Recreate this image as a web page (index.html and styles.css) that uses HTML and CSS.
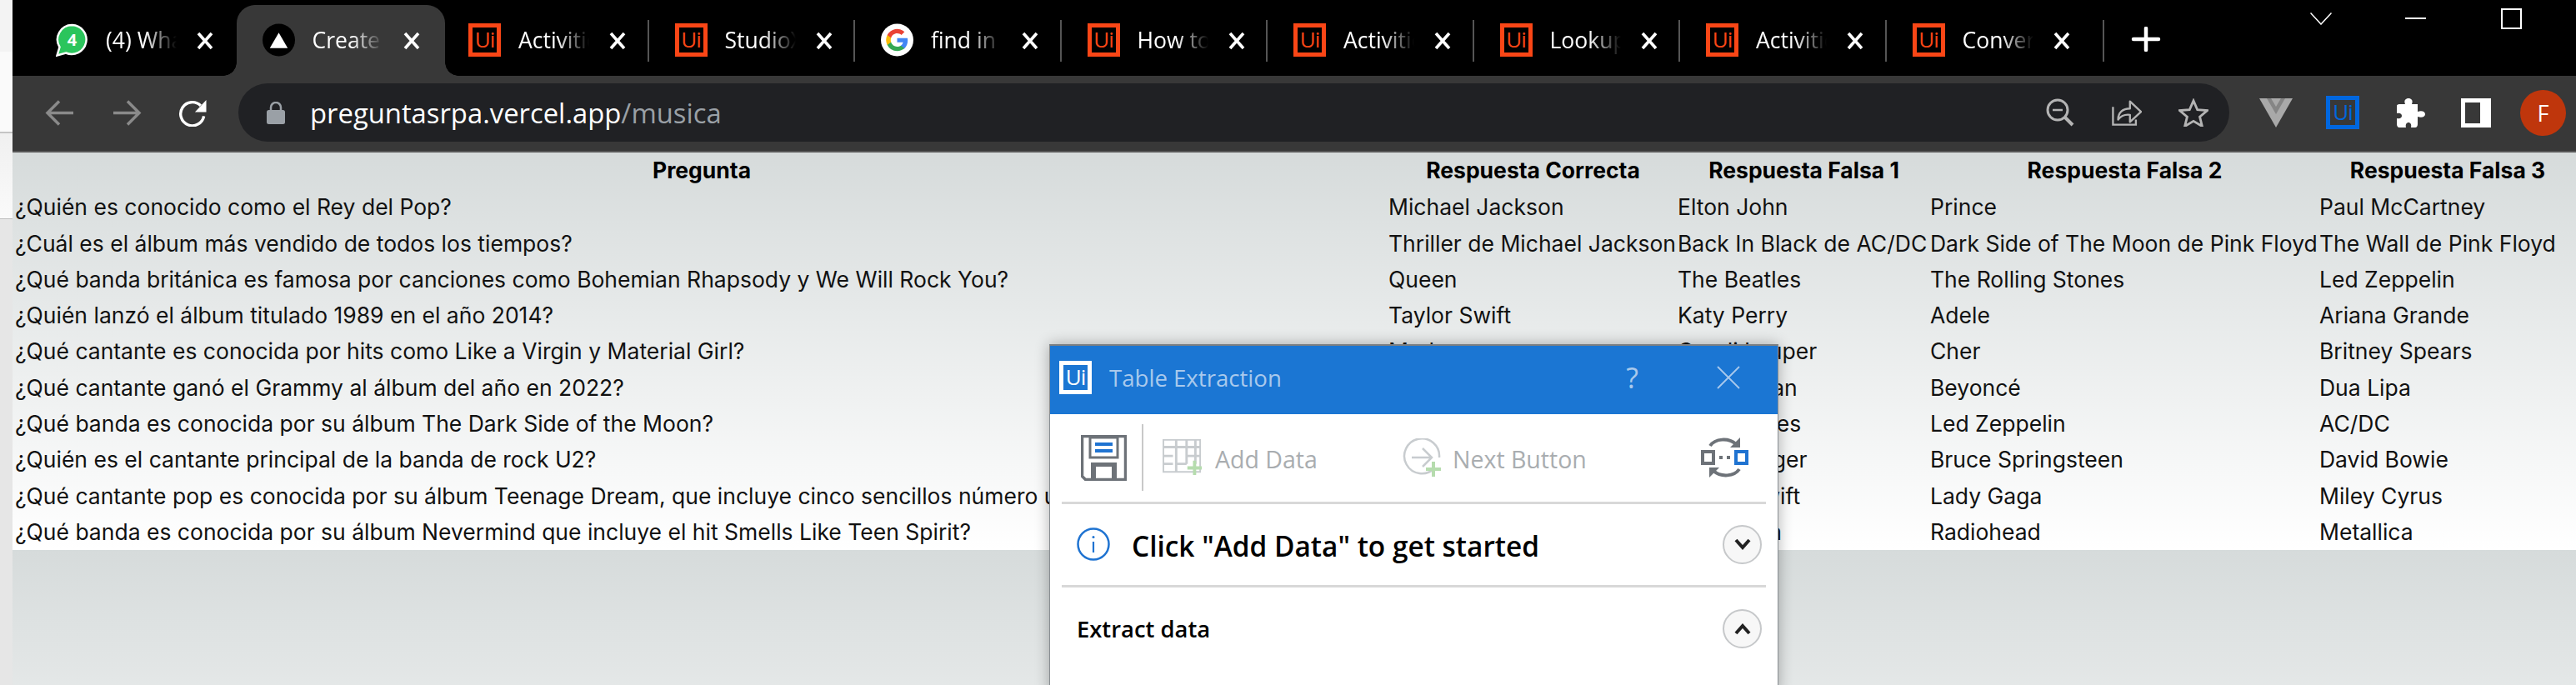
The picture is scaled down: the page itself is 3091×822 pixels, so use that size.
FILE: index.html
```html
<!DOCTYPE html>
<html lang="en">
<head>
    <meta charset="UTF-8">
    <meta name="viewport" content="width=device-width, initial-scale=1.0">
    <title>Preguntas RPA</title>
    <link rel="stylesheet" href="styles.css">
</head>
<body>
    <svg class="defs" width="0" height="0">
        <symbol id="close" viewBox="0 0 20 22"><path d="M2 2 18 20M18 2 2 20" stroke="#fff" stroke-width="3.6" fill="none"/></symbol>
    </svg>

    <div class="strip"></div>

    <div class="browser">
        <!-- tabs -->
        <div class="tabs">
            <div class="tab">
                <svg class="favicon" viewBox="0 0 39 39"><path d="M19.5 1.5A17.5 17.5 0 0 0 4.5 28L1.5 38l10.5-3A17.5 17.5 0 1 0 19.5 1.5z" fill="#2bc55c" stroke="#fff" stroke-width="2.5"/><text x="19.5" y="26" class="wa-num">4</text></svg>
                <span class="tab-title">(4) WhatsApp</span>
                <svg class="tab-close"><use href="#close"/></svg>
            </div>
            <div class="tab active">
                <svg class="favicon" viewBox="0 0 40 40"><circle cx="20" cy="20" r="20" fill="#000"/><path d="M20 11 31 30H9z" fill="#fff"/></svg>
                <span class="tab-title">Create Next App</span>
                <svg class="tab-close"><use href="#close"/></svg>
            </div>
            <div class="tab">
                <span class="ui-logo">Ui</span>
                <span class="tab-title">Activities</span>
                <svg class="tab-close"><use href="#close"/></svg>
            </div>
            <div class="tab">
                <span class="ui-logo">Ui</span>
                <span class="tab-title">StudioX</span>
                <svg class="tab-close"><use href="#close"/></svg>
            </div>
            <div class="tab">
                <svg class="favicon" viewBox="0 0 40 40">
                    <circle cx="20" cy="20" r="20" fill="#fff"/>
                    <path d="M33 20.4c0-1-.1-1.900-.3-2.700H20v5.200h7.300a6.300 6.300 0 0 1-2.700 4.100v3.400h4.400c2.500-2.400 4-5.800 4-10z" fill="#4285f4"/>
                    <path d="M20 33.500c3.600 0 6.700-1.200 9-3.200l-4.400-3.400c-1.200.8-2.800 1.300-4.600 1.300-3.500 0-6.500-2.400-7.500-5.600H7.900v3.500A13.500 13.500 0 0 0 20 33.500z" fill="#34a853"/>
                    <path d="M12.500 22.600a8.100 8.100 0 0 1 0-5.200v-3.500H7.900a13.500 13.500 0 0 0 0 12.200z" fill="#fbbc05"/>
                    <path d="M20 11.800c2 0 3.800.7 5.200 2l3.900-3.900A13.500 13.500 0 0 0 7.900 13.900l4.600 3.500c1-3.200 4-5.600 7.500-5.600z" fill="#ea4335"/>
                </svg>
                <span class="tab-title">find in page</span>
                <svg class="tab-close"><use href="#close"/></svg>
            </div>
            <div class="tab">
                <span class="ui-logo">Ui</span>
                <span class="tab-title">How to use</span>
                <svg class="tab-close"><use href="#close"/></svg>
            </div>
            <div class="tab">
                <span class="ui-logo">Ui</span>
                <span class="tab-title">Activities</span>
                <svg class="tab-close"><use href="#close"/></svg>
            </div>
            <div class="tab">
                <span class="ui-logo">Ui</span>
                <span class="tab-title">Lookup</span>
                <svg class="tab-close"><use href="#close"/></svg>
            </div>
            <div class="tab">
                <span class="ui-logo">Ui</span>
                <span class="tab-title">Activities</span>
                <svg class="tab-close"><use href="#close"/></svg>
            </div>
            <div class="tab last">
                <span class="ui-logo">Ui</span>
                <span class="tab-title">Convert</span>
                <svg class="tab-close"><use href="#close"/></svg>
            </div>
            <svg class="new-tab" viewBox="0 0 36 30"><path d="M18 2v26M3 15h30" stroke="#fff" stroke-width="4.500" stroke-linecap="round"/></svg>
            <div class="win-controls">
                <svg class="win-chevron" viewBox="0 0 26 15"><path d="M.5.5 13 14 25.500.5" stroke="#fff" stroke-width="1.500" fill="none"/></svg>
                <span class="win-min"></span>
                <span class="win-max"></span>
            </div>
        </div>

        <!-- address bar -->
        <div class="toolbar">
            <svg class="nav-icon" viewBox="0 0 36 32"><path d="M34 16H4M17 2 3 16l14 14" stroke="#8a8a8a" stroke-width="3.500" fill="none"/></svg>
            <svg class="nav-icon" viewBox="0 0 36 32"><path d="M2 16h30M19 2l14 14-14 14" stroke="#8a8a8a" stroke-width="3.500" fill="none"/></svg>
            <svg class="nav-icon" viewBox="0 0 36 34"><path d="M31 21A14.500 14.500 0 1 1 27 8" stroke="#fff" stroke-width="3.500" fill="none"/><path d="M34 1v15H20z" fill="#fff"/></svg>
            <div class="omnibox">
                <svg class="lock" viewBox="0 0 22 27"><path d="M5 12V7a6 6 0 0 1 12 0v5" stroke="#9aa0a6" stroke-width="2.500" fill="none"/><rect y="10" width="22" height="17" rx="2.500" fill="#9aa0a6"/></svg>
                <span class="url">preguntasrpa.vercel.app<span class="url-path">/musica</span></span>
                <div class="omni-icons">
                    <svg class="omni-icon" viewBox="0 0 34 34"><circle cx="14" cy="14" r="12" stroke="#b4b4b4" stroke-width="3" fill="none"/><path d="M8 14h12" stroke="#b4b4b4" stroke-width="2.500"/><path d="M23 23l9 9" stroke="#b4b4b4" stroke-width="4"/></svg>
                    <svg class="omni-icon" viewBox="0 0 38 34"><path d="M1.500 10v22.500h29V26" stroke="#b4b4b4" stroke-width="2.500" fill="none"/><path d="M8 26c0-9 6-14 15-14V3l14 13-14 13v-9c-7-1-11 1-15 6z" stroke="#b4b4b4" stroke-width="2.500" fill="none" stroke-linejoin="round"/></svg>
                    <svg class="omni-icon" viewBox="0 0 38 36"><path d="M19 3l5 11.500 12.500 1-9.500 8 3 12-11-6.500-11 6.500 3-12-9.500-8 12.500-1z" stroke="#b4b4b4" stroke-width="3" fill="none"/></svg>
                </div>
            </div>
            <div class="ext-icons">
                <svg class="ext-v" viewBox="0 0 40 35"><path d="M0 0h40L20 35z" fill="#a9a9a9"/><path d="M9 0h22L20 19z" fill="#858585"/><path d="M14 0h12l-6 10z" fill="#a9a9a9"/></svg>
                <span class="ui-logo blue">Ui</span>
                <svg class="ext-puzzle" viewBox="0 0 36 35"><path d="M5 7h7c-2-5 1-7 4-7s6 2 4 7h7v9c5-2 9 0 9 3s-4 5-9 3v9c0 2-1 4-3 4h-5c1-4-1-6-3-6s-4 2-3 6H5c-2 0-3-2-3-4v-7c4 1 6-1 6-3s-2-4-6-3V9c0-1 1-2 3-2z" fill="#fff"/></svg>
                <svg class="ext-side" viewBox="0 0 36 35"><path d="M0 0h36v35H0zM5 5v25h18V5z" fill="#fff" fill-rule="evenodd"/></svg>
                <span class="avatar">F</span>
            </div>
        </div>

        <!-- page content -->
        <main class="page">
            <table class="questions">
                <colgroup>
                    <col class="col-q"><col class="col-a"><col class="col-b"><col class="col-c"><col class="col-d">
                </colgroup>
                <thead>
                    <tr>
                        <th>Pregunta</th>
                        <th>Respuesta Correcta</th>
                        <th>Respuesta Falsa 1</th>
                        <th>Respuesta Falsa 2</th>
                        <th>Respuesta Falsa 3</th>
                    </tr>
                </thead>
                <tbody>
                    <tr><td>¿Quién es conocido como el Rey del Pop?</td><td>Michael Jackson</td><td>Elton John</td><td>Prince</td><td>Paul McCartney</td></tr>
                    <tr><td>¿Cuál es el álbum más vendido de todos los tiempos?</td><td>Thriller de Michael Jackson</td><td>Back In Black de AC/DC</td><td>Dark Side of The Moon de Pink Floyd</td><td>The Wall de Pink Floyd</td></tr>
                    <tr><td>¿Qué banda británica es famosa por canciones como Bohemian Rhapsody y We Will Rock You?</td><td>Queen</td><td>The Beatles</td><td>The Rolling Stones</td><td>Led Zeppelin</td></tr>
                    <tr><td>¿Quién lanzó el álbum titulado 1989 en el año 2014?</td><td>Taylor Swift</td><td>Katy Perry</td><td>Adele</td><td>Ariana Grande</td></tr>
                    <tr><td>¿Qué cantante es conocida por hits como Like a Virgin y Material Girl?</td><td>Madonna</td><td>Cyndi Lauper</td><td>Cher</td><td>Britney Spears</td></tr>
                    <tr><td>¿Qué cantante ganó el Grammy al álbum del año en 2022?</td><td>Olivia Rodrigo</td><td>Ed Sheeran</td><td>Beyoncé</td><td>Dua Lipa</td></tr>
                    <tr><td>¿Qué banda es conocida por su álbum The Dark Side of the Moon?</td><td>Pink Floyd</td><td>The Beatles</td><td>Led Zeppelin</td><td>AC/DC</td></tr>
                    <tr><td>¿Quién es el cantante principal de la banda de rock U2?</td><td>Bono</td><td>Mick Jagger</td><td>Bruce Springsteen</td><td>David Bowie</td></tr>
                    <tr><td>¿Qué cantante pop es conocida por su álbum Teenage Dream, que incluye cinco sencillos número uno?</td><td>Katy Perry</td><td>Taylor Swift</td><td>Lady Gaga</td><td>Miley Cyrus</td></tr>
                    <tr><td>¿Qué banda es conocida por su álbum Nevermind que incluye el hit Smells Like Teen Spirit?</td><td>Nirvana</td><td>Pearl Jam</td><td>Radiohead</td><td>Metallica</td></tr>
                </tbody>
            </table>
        </main>
    </div>

    <!-- floating wizard window -->
    <section class="dialog">
        <header class="dialog-title">
            <span class="ui-logo white">Ui</span>
            <span class="dialog-name">Table Extraction</span>
            <span class="dialog-help">?</span>
            <svg class="dialog-x" viewBox="0 0 28 28"><path d="M1 1l26 26M27 1 1 27" stroke="#a9c9ec" stroke-width="1.800"/></svg>
        </header>
        <div class="dialog-tools">
            <svg class="tool-save" viewBox="0 0 55 55"><path d="M1.500 1.500h52v52h-48l-4-4z" fill="#fff" stroke="#6d7278" stroke-width="3.500"/><path d="M11 3h33v24H11z" fill="#fff" stroke="#6d7278" stroke-width="3"/><path d="M17 9h21v4H17zM17 17h21v4H17z" fill="#1f73d1"/><path d="M12 52V33h31v19h-6V38H18v14z" fill="#6d7278"/></svg>
            <span class="tool-sep"></span>
            <div class="tool">
                <svg class="tool-icon" viewBox="0 0 50 46"><path d="M1 1h46v40H1z" fill="none" stroke="#c8cccf" stroke-width="2"/><path d="M1 10h46M1 21h12M1 31h12M17 1v40M30 1v30M41 1v30M30 21h17M17 31h13" stroke="#c8cccf" stroke-width="3"/><path d="M40 27v18M31 36h18" stroke="#b6dcae" stroke-width="4"/></svg>
                <span>Add Data</span>
            </div>
            <div class="tool next">
                <svg class="tool-icon" viewBox="0 0 46 46"><path d="M37 36A21 21 0 1 1 43 23" fill="none" stroke="#c8cccf" stroke-width="2.500"/><path d="M10 23h24M23 12l11 11-11 11" fill="none" stroke="#c8cccf" stroke-width="2.500"/><path d="M36 28v18M27 37h18" stroke="#b6dcae" stroke-width="4"/></svg>
                <span>Next Button</span>
            </div>
            <svg class="tool-sync" viewBox="0 0 57 52"><path d="M11 12C17 3 33 2 42 10" fill="none" stroke="#6d7278" stroke-width="4"/><path d="M47 2v12H35z" fill="#6d7278"/><path d="M46 40C40 49 24 50 15 42" fill="none" stroke="#6d7278" stroke-width="4"/><path d="M10 50V38h12z" fill="#6d7278"/><rect x="2" y="19" width="13" height="14" fill="#fff" stroke="#6d7278" stroke-width="4"/><rect x="42" y="19" width="13" height="14" fill="#fff" stroke="#1f73d1" stroke-width="4"/><path d="M22 24h4v4h-4zM31 24h4v4h-4z" fill="#6d7278"/></svg>
        </div>
        <div class="dialog-row info">
            <svg class="info-icon" viewBox="0 0 40 40"><circle cx="20" cy="20" r="18.500" fill="none" stroke="#1f73d1" stroke-width="2.500"/><path d="M20 17v13" stroke="#1f73d1" stroke-width="2.200"/><circle cx="20" cy="11.500" r="1.500" fill="#1f73d1"/></svg>
            <span class="info-text">Click "Add Data" to get started</span>
            <span class="round-btn"><svg viewBox="0 0 20 14"><path d="M2 2l8 9 8-9" fill="none" stroke="#222" stroke-width="4"/></svg></span>
        </div>
        <div class="dialog-row section">
            <span class="section-name">Extract data</span>
            <span class="round-btn"><svg viewBox="0 0 20 14"><path d="M2 12l8-9 8 9" fill="none" stroke="#222" stroke-width="4"/></svg></span>
        </div>
    </section>
</body>
</html>
```

FILE: styles.css
```css
* {
    box-sizing: border-box;
}
body {
    margin: 0;
    height: 822px;
    display: flex;
    overflow: hidden;
    position: relative;
    font-family: "Open Sans", "Liberation Sans", sans-serif;
    background: #f1f1f1;
}
.defs {
    position: absolute;
}
.strip {
    width: 15px;
    flex: none;
    background: linear-gradient(#f3f3f3 0, #f3f3f3 62px, #fafafa 62px, #fafafa 158px, #c4c4c4 158px, #c4c4c4 160px, #f0f0f0 160px, #fafafa 262px, #bdbdbd 262px, #bdbdbd 263px, #e6e6e6 263px);
}
.browser {
    flex: 1;
    min-width: 0;
    display: flex;
    flex-direction: column;
}

/* tabs */
.tabs {
    height: 91px;
    flex: none;
    background: #000;
    display: flex;
    padding-left: 21px;
    position: relative;
}
.tab {
    width: 247.5px;
    height: 85px;
    margin-top: 6px;
    padding: 22px 0 0 31px;
    display: flex;
    align-items: flex-start;
    position: relative;
    color: #fff;
}
.tab::after {
    content: "";
    position: absolute;
    right: 0;
    top: 18px;
    height: 50px;
    width: 2px;
    background: #555;
}
.tab.active {
    background: #383838;
    border-radius: 22px 22px 0 0;
    box-shadow: 3px 0 0 #383838;
}
.tab:first-child::after {
    display: none;
}
/* flared bottom corners of the selected tab */
.tab.active::before,
.tab.active::after {
    content: "";
    position: absolute;
    top: auto;
    bottom: 0;
    width: 16px;
    height: 16px;
}
.tab.active::before {
    left: -16px;
    background: radial-gradient(circle at 0 0, #000 15.5px, #383838 16px);
}
.tab.active::after {
    right: -19px;
    background: radial-gradient(circle at 100% 0, #000 15.5px, #383838 16px);
}
.tab.last {
    width: 261px;
}
.favicon {
    width: 39px;
    height: 40px;
    flex: none;
}
.tab-title {
    width: 85px;
    margin-left: 21px;
    font-size: 26.5px;
    line-height: 40px;
    white-space: nowrap;
    overflow: hidden;
    flex: none;
    -webkit-mask-image: linear-gradient(to right, #000 55%, transparent 100%);
    mask-image: linear-gradient(to right, #000 55%, transparent 100%);
}
.tab-close {
    width: 20px;
    height: 22px;
    margin: 10px 0 0 24px;
    flex: none;
}
.wa-num {
    font-size: 20px;
    font-weight: 700;
    fill: #fff;
    text-anchor: middle;
}
.ui-logo {
    width: 39px;
    height: 40px;
    flex: none;
    border: 5px solid #fa4616;
    color: #fa4616;
    font-size: 26px;
    line-height: 29px;
    text-align: center;
    letter-spacing: -1px;
}
.ui-logo.blue {
    border-color: #0067df;
    color: #0067df;
    width: 40px;
}
.ui-logo.white {
    border-color: #fff;
    color: #fff;
    background: #1b76d3;
}
.new-tab {
    width: 36px;
    height: 30px;
    margin: 32px 0 0 32px;
    flex: none;
}
.win-controls {
    position: absolute;
    top: 0;
    left: 2757px;
    display: flex;
    align-items: flex-start;
}
.win-chevron {
    width: 26px;
    height: 15px;
    margin-top: 15px;
}
.win-min {
    width: 25px;
    height: 2px;
    background: #fff;
    margin: 21px 0 0 88px;
}
.win-max {
    width: 25px;
    height: 25px;
    border: 2px solid #fff;
    margin: 10px 0 0 90px;
}

/* toolbar */
.toolbar {
    height: 92px;
    flex: none;
    background: #383838;
    border-bottom: 2px solid #575757;
    display: flex;
    align-items: center;
    padding: 0 12px 2px 39px;
}
.nav-icon {
    width: 36px;
    height: 33px;
    margin-right: 44px;
    flex: none;
}
.nav-icon:nth-of-type(3) {
    margin-right: 36px;
}
.omnibox {
    width: 2389px;
    height: 70px;
    flex: none;
    border-radius: 35px;
    background: #202124;
    display: flex;
    align-items: center;
    padding: 0 25px 0 34px;
}
.lock {
    width: 22px;
    height: 27px;
    flex: none;
}
.url {
    margin-left: 30px;
    color: #fff;
    font-size: 32.8px;
}
.url-path {
    color: #9aa0a6;
}
.omni-icons {
    margin-left: auto;
    display: flex;
    align-items: center;
    gap: 44px;
}
.omni-icon {
    width: 36px;
    height: 34px;
}
.ext-icons {
    flex: 1;
    display: flex;
    align-items: center;
    margin-left: 36px;
}
.ext-v {
    width: 40px;
    height: 35px;
    margin-right: 40px;
}
.ext-puzzle {
    width: 36px;
    height: 35px;
    margin: 0 43px;
}
.ext-side {
    width: 36px;
    height: 35px;
    margin-right: 35px;
}
.avatar {
    width: 55px;
    height: 55px;
    border-radius: 50%;
    background: #bf360c;
    color: #fff;
    font-size: 27px;
    line-height: 55px;
    text-align: center;
}

/* page */
.page {
    flex: 1;
    padding-left: 3px;
    background: linear-gradient(#d6dbdb, #fff) 0 0 / 100% 477px repeat-y;
    font-family: Inter, "Liberation Sans", sans-serif;
    color: #111;
    overflow: hidden;
}
.questions {
    border-collapse: collapse;
    table-layout: fixed;
    width: 3073px;
    font-size: 26.5px;
    line-height: 43.3px;
}
.col-q { width: 1648px; }
.col-a { width: 347px; }
.col-b { width: 303px; }
.col-c { width: 467px; }
.questions th,
.questions td {
    padding: 0;
    white-space: nowrap;
    text-align: left;
}
.questions td {
    padding-top: 1px;
    line-height: 42.3px;
}
.questions th {
    text-align: center;
    font-weight: 700;
    color: #000;
}

/* dialog */
.dialog {
    position: absolute;
    left: 1259px;
    top: 413px;
    width: 875px;
    height: 420px;
    background: #fff;
    border: 1px solid #8a8f93;
    border-top: 2px solid #7b7f82;
    box-shadow: 0 0 16px rgba(0, 0, 0, 0.3);
}
.dialog-title {
    height: 82px;
    background: #1b76d3;
    display: flex;
    align-items: center;
    padding: 0 45px 6px 11px;
    color: #a9c9ec;
}
.dialog-name {
    margin-left: 21px;
    font-size: 27.6px;
}
.dialog-help {
    margin-left: auto;
    font-size: 34px;
}
.dialog-x {
    width: 28px;
    height: 28px;
    margin-left: 94px;
}
.dialog-tools {
    height: 107.5px;
    margin: 0 14px;
    border-bottom: 3px solid #d8d8d8;
    display: flex;
    align-items: center;
    padding: 0 21px 0 23px;
}
.tool-save {
    width: 55px;
    height: 55px;
    flex: none;
}
.tool-sep {
    width: 2px;
    height: 80px;
    background: #c9c9c9;
    margin: 0 23px 0 18px;
}
.tool {
    display: flex;
    align-items: center;
    gap: 15px;
    color: #a9adb0;
    font-size: 28.5px;
    width: 288px;
}
.tool span {
    padding-top: 3px;
}
.tool.next {
    width: auto;
    gap: 12px;
}
.tool-icon {
    width: 48px;
    height: 46px;
    flex: none;
}
.tool-sync {
    width: 57px;
    height: 52px;
    margin-left: auto;
}
.dialog-row {
    height: 100px;
    margin: 0 14px;
    display: flex;
    align-items: center;
    padding: 0 5px 0 18px;
}
.dialog-row.info {
    border-bottom: 3px solid #d8d8d8;
}
.info-icon {
    width: 40px;
    height: 40px;
    flex: none;
}
.info-text {
    margin-left: 26px;
    padding-top: 3px;
    font-size: 33.4px;
    font-weight: 600;
    color: #000;
}
.section-name {
    font-size: 27.4px;
    font-weight: 600;
    color: #000;
}
.round-btn {
    margin-left: auto;
    width: 47px;
    height: 47px;
    border-radius: 50%;
    border: 2px solid #c6c8ca;
    background: #f7f7f7;
    display: flex;
    align-items: center;
    justify-content: center;
}
.round-btn svg {
    width: 20px;
    height: 14px;
}
```
